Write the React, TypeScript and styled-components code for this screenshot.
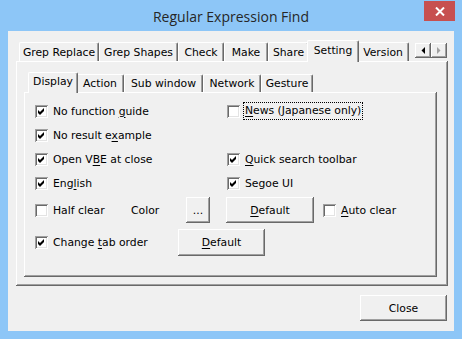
import { ReactNode } from "react";
import styled, { createGlobalStyle } from "styled-components";

const GlobalStyle = createGlobalStyle`
  html, body {
    margin: 0;
    padding: 0;
    background: #8dc6f7;
  }
  body {
    font-family: "DejaVu Sans", Tahoma, sans-serif;
    font-size: 10.8px;
    color: #000;
  }
  * {
    box-sizing: border-box;
  }
`;

const raised = `
  box-shadow:
    inset -1px -1px 0 #696969,
    inset 1px 1px 0 #ffffff,
    inset -2px -2px 0 #a0a0a0,
    inset 2px 2px 0 #f0f0f0;
`;

const Frame = styled.div`
  width: 462px;
  height: 339px;
  background: #8dc6f7;
  display: flex;
  flex-direction: column;
`;

const TitleBar = styled.div`
  height: 31px;
  display: grid;
  grid-template-columns: 1fr auto 1fr;
  align-items: center;
`;

const Title = styled.div`
  grid-column: 2;
  font-family: "Open Sans", "Noto Sans", sans-serif;
  font-size: 14px;
  color: #262626;
  padding-top: 1px;
`;

const CloseX = styled.div`
  grid-column: 3;
  justify-self: end;
  align-self: start;
  margin: 1px 7px 0 0;
  width: 31px;
  height: 20px;
  background: #c75050;
  display: flex;
  align-items: center;
  justify-content: center;
`;

const Client = styled.div`
  flex: 1;
  margin: 0 8px 8px;
  background: #f0f0f0;
  padding: 8px 6px 10px 8px;
  display: flex;
  flex-direction: column;
`;

const TabControl = styled.div`
  display: flex;
  flex-direction: column;
`;

const TabStrip = styled.div<{ $indent: number; $height: number }>`
  display: flex;
  align-items: flex-end;
  height: ${(p) => p.$height}px;
  padding-left: ${(p) => p.$indent}px;
  position: relative;
  z-index: 1;
`;

const Tab = styled.div<{ $width: number; $active?: boolean; $height: number }>`
  width: ${(p) => p.$width + (p.$active ? 4 : 0)}px;
  height: ${(p) => p.$height + (p.$active ? 3 : 0)}px;
  margin: 0 ${(p) => (p.$active ? -2 : 0)}px ${(p) => (p.$active ? -1 : 0)}px;
  background: #f0f0f0;
  border-top: 1px solid #ffffff;
  border-left: 1px solid #ffffff;
  border-right: 1px solid #696969;
  box-shadow: inset -1px 0 0 #a0a0a0;
  border-radius: 2px 2px 0 0;
  display: flex;
  align-items: center;
  justify-content: center;
  padding-bottom: ${(p) => (p.$active ? 3 : 0)}px;
  position: relative;
  z-index: ${(p) => (p.$active ? 2 : 1)};
  white-space: nowrap;
`;

const Panel = styled.div<{ $height: number; $pad: string }>`
  height: ${(p) => p.$height}px;
  padding: ${(p) => p.$pad};
  background: #f0f0f0;
  ${raised}
  display: flex;
  flex-direction: column;
`;

const ScrollArrows = styled.div`
  margin: 0 1px 0 auto;
  align-self: flex-start;
  margin-top: 4px;
  display: flex;
`;

const ArrowButton = styled.div<{ $disabled?: boolean }>`
  width: 16px;
  height: 15px;
  background: #f0f0f0;
  ${raised}
  display: flex;
  align-items: center;
  justify-content: center;
  color: ${(p) => (p.$disabled ? "#a0a0a0" : "#000")};
`;

const Row = styled.div<{ $height: number; $gap?: number }>`
  height: ${(p) => p.$height}px;
  margin-top: ${(p) => p.$gap ?? 0}px;
  display: flex;
  align-items: center;
`;

const CheckItem = styled.label<{ $width?: number; $ml?: number }>`
  width: ${(p) => (p.$width ? `${p.$width}px` : "auto")};
  margin-left: ${(p) => p.$ml ?? 0}px;
  display: flex;
  align-items: center;
  gap: 5px;
  white-space: nowrap;
`;

const Box = styled.span`
  width: 13px;
  height: 13px;
  background: #ffffff;
  box-shadow:
    inset 1px 1px 0 #a0a0a0,
    inset -1px -1px 0 #ffffff,
    inset 2px 2px 0 #696969,
    inset -2px -2px 0 #e3e3e3;
  display: flex;
  flex-shrink: 0;
`;

const Focus = styled.span`
  border: 1px dotted #000;
  padding: 1px 1px 2px;
  margin-left: -2px;
`;

const Label = styled.span<{ $width: number }>`
  width: ${(p) => p.$width}px;
`;

const Button = styled.div<{ $width: number; $height: number; $ml?: number }>`
  width: ${(p) => p.$width}px;
  height: ${(p) => p.$height}px;
  margin-left: ${(p) => p.$ml ?? 0}px;
  background: #f0f0f0;
  ${raised}
  display: flex;
  align-items: center;
  justify-content: center;
  flex-shrink: 0;
`;

const Footer = styled.div`
  display: flex;
  justify-content: flex-end;
  padding: 9px 1px 0 0;
`;

const Key = styled.u`
  text-decoration-thickness: 1px;
  text-underline-offset: 2px;
`;

const CheckMark = () => (
  <svg width="13" height="13" viewBox="0 0 13 13">
    <path d="M3 5 L5 7 L9 3 V6 L5 10 L3 8 Z" fill="#000" />
  </svg>
);

const Check = ({
  checked,
  width,
  ml,
  children,
}: {
  checked?: boolean;
  width?: number;
  ml?: number;
  children: ReactNode;
}) => (
  <CheckItem $width={width} $ml={ml}>
    <Box>{checked && <CheckMark />}</Box>
    {children}
  </CheckItem>
);

const outerTabs = [
  { name: "Grep Replace", w: 80 },
  { name: "Grep Shapes", w: 79 },
  { name: "Check", w: 46 },
  { name: "Make", w: 44 },
  { name: "Share", w: 41 },
  { name: "Setting", w: 48, active: true },
  { name: "Version", w: 52 },
];

const innerTabs = [
  { name: "Display", w: 46, active: true },
  { name: "Action", w: 48 },
  { name: "Sub window", w: 79 },
  { name: "Network", w: 58 },
  { name: "Gesture", w: 52 },
];

export default function App() {
  return (
    <Frame>
      <GlobalStyle />
      <TitleBar>
        <Title>Regular Expression Find</Title>
        <CloseX>
          <svg width="10" height="9" viewBox="0 0 10 9">
            <path d="M1 0.5 L9 8.5 M9 0.5 L1 8.5" stroke="#fff" strokeWidth="2" />
          </svg>
        </CloseX>
      </TitleBar>
      <Client>
        <TabControl>
          <TabStrip $indent={3} $height={22}>
            {outerTabs.map((t) => (
              <Tab key={t.name} $width={t.w} $height={19} $active={t.active}>
                {t.name}
              </Tab>
            ))}
            <ScrollArrows>
              <ArrowButton>
                <svg width="4" height="7" viewBox="0 0 4 7">
                  <path d="M4 0 V7 L0.5 3.5 Z" fill="currentColor" />
                </svg>
              </ArrowButton>
              <ArrowButton $disabled>
                <svg width="4" height="7" viewBox="0 0 4 7">
                  <path d="M0 0 V7 L3.5 3.5 Z" fill="currentColor" />
                </svg>
              </ArrowButton>
            </ScrollArrows>
          </TabStrip>
          <Panel $height={225} $pad="10px 11px 9px 8px">
            <TabControl>
              <TabStrip $indent={6} $height={21}>
                {innerTabs.map((t) => (
                  <Tab key={t.name} $width={t.w} $height={18} $active={t.active}>
                    {t.name}
                  </Tab>
                ))}
              </TabStrip>
              <Panel $height={185} $pad="7px 11px">
                <Row $height={24}>
                  <Check checked width={192}>
                    <span>
                      No function <Key>g</Key>uide
                    </span>
                  </Check>
                  <Check>
                    <Focus>
                      <Key>N</Key>ews (Japanese only)
                    </Focus>
                  </Check>
                </Row>
                <Row $height={24}>
                  <Check checked width={192}>
                    <span>
                      No result e<Key>x</Key>ample
                    </span>
                  </Check>
                </Row>
                <Row $height={24}>
                  <Check checked width={192}>
                    <span>
                      Open V<Key>B</Key>E at close
                    </span>
                  </Check>
                  <Check checked>
                    <span>
                      <Key>Q</Key>uick search toolbar
                    </span>
                  </Check>
                </Row>
                <Row $height={24}>
                  <Check checked width={192}>
                    <span>
                      Eng<Key>l</Key>ish
                    </span>
                  </Check>
                  <Check checked>
                    <span>Segoe UI</span>
                  </Check>
                </Row>
                <Row $height={26} $gap={2}>
                  <Check width={96}>
                    <span>Half clear</span>
                  </Check>
                  <Label $width={55}>Color</Label>
                  <Button $width={24} $height={26}>
                    ...
                  </Button>
                  <Button $width={88} $height={26} $ml={16}>
                    <span>
                      <Key>D</Key>efault
                    </span>
                  </Button>
                  <Check ml={9}>
                    <span>
                      <Key>A</Key>uto clear
                    </span>
                  </Check>
                </Row>
                <Row $height={27} $gap={6}>
                  <Check checked width={143}>
                    <span>
                      Change <Key>t</Key>ab order
                    </span>
                  </Check>
                  <Button $width={87} $height={27}>
                    <span>
                      <Key>D</Key>efault
                    </span>
                  </Button>
                </Row>
              </Panel>
            </TabControl>
          </Panel>
        </TabControl>
        <Footer>
          <Button $width={87} $height={26}>
            Close
          </Button>
        </Footer>
      </Client>
    </Frame>
  );
}
